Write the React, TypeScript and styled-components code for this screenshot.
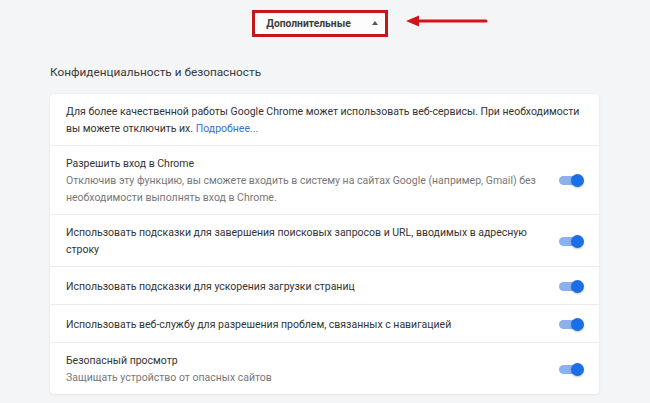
import { createGlobalStyle, styled } from 'styled-components';

const GlobalStyle = createGlobalStyle`
  html, body {
    margin: 0;
    padding: 0;
    background: #f4f5f6;
  }
  body {
    font-family: Roboto, 'Noto Sans', Arial, sans-serif;
    color: #333;
  }
`;

interface SettingRow {
  title: string;
  sub?: string;
  toggle?: boolean;
}

const rows: SettingRow[] = [
  {
    title: 'Разрешить вход в Chrome',
    sub: 'Отключив эту функцию, вы сможете входить в систему на сайтах Google (например, Gmail) без необходимости выполнять вход в Chrome.',
    toggle: true,
  },
  {
    title:
      'Использовать подсказки для завершения поисковых запросов и URL, вводимых в адресную строку',
    toggle: true,
  },
  { title: 'Использовать подсказки для ускорения загрузки страниц', toggle: true },
  {
    title: 'Использовать веб-службу для разрешения проблем, связанных с навигацией',
    toggle: true,
  },
  {
    title: 'Безопасный просмотр',
    sub: 'Защищать устройство от опасных сайтов',
    toggle: true,
  },
];

const App = () => {
  return (
    <Page>
      <GlobalStyle />
      <TopBar>
        <AdvancedButton>
          Дополнительные
          <Caret />
          <Arrow width="82" height="12" viewBox="0 0 82 12">
            <line x1="10" y1="6" x2="80" y2="6" stroke="#d0141a" strokeWidth="3" strokeLinecap="round" />
            <polygon points="0,6 13,0.5 13,11.5" fill="#d0141a" />
          </Arrow>
        </AdvancedButton>
      </TopBar>
      <Section>
        <SectionTitle>Конфиденциальность и безопасность</SectionTitle>
        <Card>
          <Row>
            <RowText>
              <Primary>
                Для более качественной работы Google Chrome может использовать веб-сервисы. При
                необходимости вы можете отключить их. <Link>Подробнее...</Link>
              </Primary>
            </RowText>
          </Row>
          {rows.map((row) => (
            <Row key={row.title}>
              <RowText>
                <Primary>{row.title}</Primary>
                {row.sub && <Secondary>{row.sub}</Secondary>}
              </RowText>
              {row.toggle && (
                <Toggle>
                  <Knob />
                </Toggle>
              )}
            </Row>
          ))}
        </Card>
      </Section>
    </Page>
  );
};

export default App;

const Page = styled.div`
  width: 650px;
  height: 403px;
  overflow: hidden;
  background: #f4f5f6;
`;

const TopBar = styled.div`
  display: flex;
  justify-content: center;
  padding: 10px 10px 0 0;
`;

const AdvancedButton = styled.div`
  position: relative;
  display: flex;
  align-items: center;
  gap: 21px;
  height: 21px;
  padding: 0 7px 0 11px;
  border: 3px solid #c4161c;
  background: #fdfdfd;
  font-size: 10.3px;
  font-weight: 700;
  color: #3c3c3c;
`;

const Caret = styled.span`
  width: 0;
  height: 0;
  border-left: 3px solid transparent;
  border-right: 3px solid transparent;
  border-bottom: 4px solid #555;
  margin-top: -1px;
`;

const Arrow = styled.svg`
  position: absolute;
  left: 151px;
  top: 2px;
`;

const Section = styled.div`
  padding: 27px 51px 0 50px;
`;

const SectionTitle = styled.div`
  font-size: 11.8px;
  color: #3a3a3a;
  margin-bottom: 13px;
  line-height: 17px;
`;

const Card = styled.div`
  background: #fff;
  border-radius: 3px;
  box-shadow: 0 0 1px rgba(0, 0, 0, 0.12), 0 1px 3px rgba(0, 0, 0, 0.06);
`;

const Row = styled.div`
  display: flex;
  align-items: center;
  gap: 20px;
  min-height: 38px;
  padding: 9px 18px 8px 16px;
  box-sizing: border-box;
  border-top: 1px solid #ececec;

  &:first-child {
    border-top: none;
    padding-right: 12px;
  }
`;

const RowText = styled.div`
  flex: 1;
  font-size: 10.5px;
  line-height: 17px;
`;

const Primary = styled.div`
  color: #333;
`;

const Secondary = styled.div`
  color: #777;
`;

const Link = styled.span`
  color: #3a6fd1;
`;

const Toggle = styled.div`
  position: relative;
  width: 22px;
  height: 9px;
  border-radius: 5px;
  background: #8bb1ef;
  flex-shrink: 0;
`;

const Knob = styled.div`
  position: absolute;
  right: -3px;
  top: -2px;
  width: 13px;
  height: 13px;
  border-radius: 50%;
  background: #1a6fe6;
  box-shadow: 0 1px 2px rgba(0, 0, 0, 0.25);
`;
